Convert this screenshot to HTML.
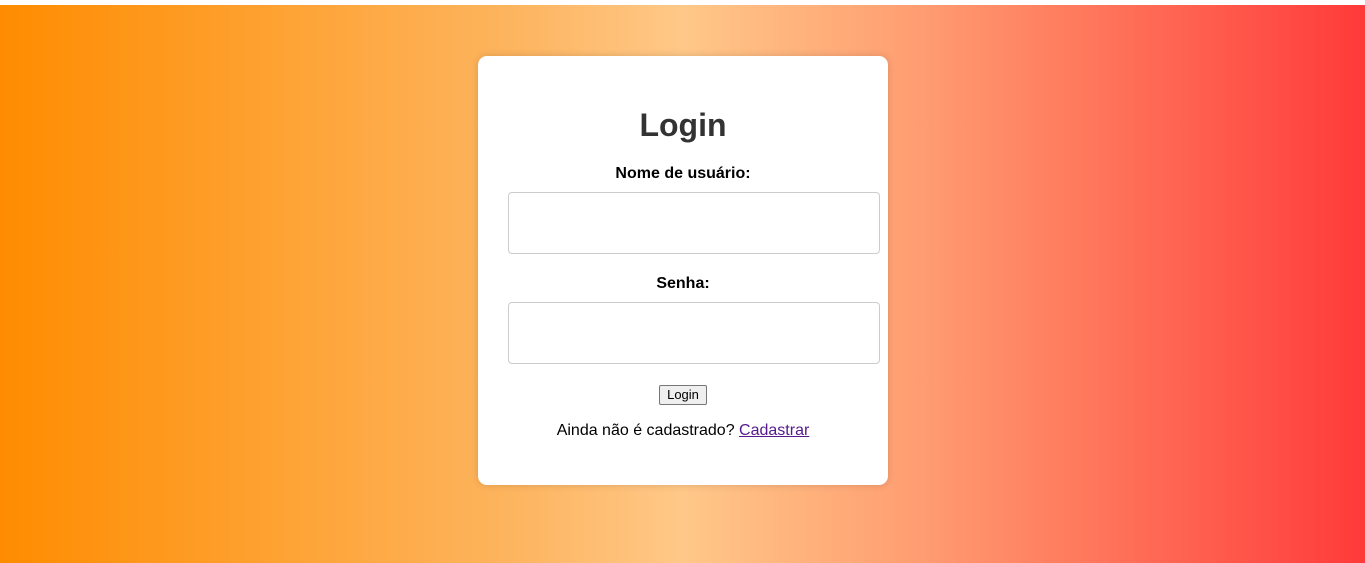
<!DOCTYPE html>
<html><head><meta charset="utf-8"><style>
html,body{margin:0;padding:0;width:1365px;height:563px;overflow:hidden;background:#fff}
.bg{position:absolute;left:0;top:5px;width:1365px;height:558px;background:linear-gradient(to right,#ff8c00 0%,#fdb560 38%,#ffc888 50%,#ff9b70 68%,#ff3a3a 100%)}
.card{position:absolute;left:478px;top:56px;width:410px;height:429px;background:#fff;border-radius:9px;box-shadow:0 0 8px rgba(0,0,0,.15);font-family:"Liberation Sans",sans-serif;text-align:center}
h1{position:absolute;left:0;right:0;margin:0;font-size:32px;font-weight:bold;color:#333;line-height:37px}
.card *{box-sizing:border-box}
.lbl{position:absolute;left:0;right:0;font-size:16px;font-weight:bold;color:#000}
.inp{position:absolute;left:30px;width:372px;height:62px;border:1px solid #ccc;border-radius:4px}
.btn{position:absolute;left:181px;top:329px;width:48px;height:20px;border:1px solid #767676;border-radius:2px;background:#efefef;font-size:13px;line-height:18px;color:#000}
.txt{position:absolute;left:0;right:0;top:366px;font-size:16px;color:#000}
a{color:#551a8b;text-decoration:underline}
</style></head><body>
<div class="bg"></div>
<div class="card">
<h1 style="top:51px">Login</h1>
<div class="lbl" style="top:109px">Nome de usuário:</div>
<div class="inp" style="top:136px"></div>
<div class="lbl" style="top:219px">Senha:</div>
<div class="inp" style="top:246px"></div>
<div class="btn">Login</div>
<div class="txt">Ainda não é cadastrado? <a>Cadastrar</a></div>
</div>
</body></html>
